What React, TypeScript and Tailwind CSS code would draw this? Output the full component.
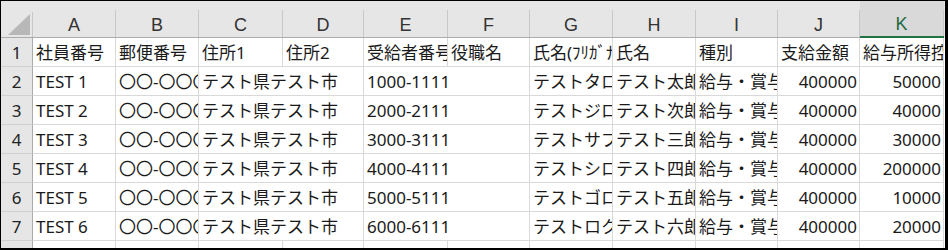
import React from 'react';

const cols = ['A', 'B', 'C', 'D', 'E', 'F', 'G', 'H', 'I', 'J', 'K'];

const headings = [
  '社員番号',
  '郵便番号',
  '住所1',
  '住所2',
  '受給者番号',
  '役職名',
  '氏名(ﾌﾘｶﾞﾅ)',
  '氏名',
  '種別',
  '支給金額',
  '給与所得控除後の金額',
];

type Row = {
  id: string;
  zip: string;
  addr: string;
  num: string;
  kana: string;
  name: string;
  kind: string;
  pay: number;
  net: number;
};

const rows: Row[] = [
  { id: 'TEST 1', zip: '〇〇-〇〇〇〇', addr: 'テスト県テスト市', num: '1000-1111', kana: 'テストタロウ', name: 'テスト太郎', kind: '給与・賞与', pay: 400000, net: 50000 },
  { id: 'TEST 2', zip: '〇〇-〇〇〇〇', addr: 'テスト県テスト市', num: '2000-2111', kana: 'テストジロウ', name: 'テスト次郎', kind: '給与・賞与', pay: 400000, net: 40000 },
  { id: 'TEST 3', zip: '〇〇-〇〇〇〇', addr: 'テスト県テスト市', num: '3000-3111', kana: 'テストサブロウ', name: 'テスト三郎', kind: '給与・賞与', pay: 400000, net: 30000 },
  { id: 'TEST 4', zip: '〇〇-〇〇〇〇', addr: 'テスト県テスト市', num: '4000-4111', kana: 'テストシロウ', name: 'テスト四郎', kind: '給与・賞与', pay: 400000, net: 200000 },
  { id: 'TEST 5', zip: '〇〇-〇〇〇〇', addr: 'テスト県テスト市', num: '5000-5111', kana: 'テストゴロウ', name: 'テスト五郎', kind: '給与・賞与', pay: 400000, net: 10000 },
  { id: 'TEST 6', zip: '〇〇-〇〇〇〇', addr: 'テスト県テスト市', num: '6000-6111', kana: 'テストロクロウ', name: 'テスト六郎', kind: '給与・賞与', pay: 400000, net: 20000 },
];

const gridCols =
  'grid grid-cols-[32px_83px_83px_84px_81px_84px_82px_83px_83px_82px_82px_84px]';

const cellBase =
  'flex items-center overflow-hidden whitespace-nowrap border-r border-b border-[#d9d9d9] bg-white';

const Cell = ({
  children,
  right,
  span,
}: {
  children?: React.ReactNode;
  right?: boolean;
  span?: boolean;
}) => (
  <div
    className={`${cellBase} ${right ? 'justify-end pr-[2px]' : 'pl-[3px]'} ${span ? 'col-span-2' : ''}`}
  >
    <span className="shrink-0">{children}</span>
  </div>
);

const RowHead = ({ n }: { n: number }) => (
  <div className="flex items-center justify-center border-r border-b border-r-[#ababab] border-b-[#d0d0d0] bg-[#e6e6e6] text-[#222]">
    {n}
  </div>
);

export default function App() {
  return (
    <div className="h-[250px] w-[948px] overflow-hidden border-t border-l border-r-[3px] border-b-2 border-black bg-white font-['Noto_Sans','Noto_Sans_CJK_JP',sans-serif] text-[17px] leading-none text-[#1a1a1a]">
      {/* column letters */}
      <div className={`${gridCols} h-[37px] bg-[#e6e6e6]`}>
        <div className="flex flex-col border-b border-[#ababab]">
          <div className="h-[11px]" />
          <div className="flex flex-1 items-end justify-end border-r border-[#c8c8c8] pb-[2px] pr-[2px]">
            <svg width="22" height="21" viewBox="0 0 22 21">
              <polygon points="22,0 22,21 0,21" fill="#b8b8b8" />
            </svg>
          </div>
        </div>
        {cols.map((c) => (
          <div
            key={c}
            className={`flex flex-col ${c === 'K' ? 'border-b-2 border-[#217346] bg-[#d9d9d9] text-[#1e6b41]' : 'border-b border-[#ababab] text-[#333]'}`}
          >
            <div className="h-[9px]" />
            <div className="flex flex-1 items-center justify-center border-r border-[#c8c8c8] pt-[2px] font-['Liberation_Sans',sans-serif] text-[18px]">
              {c}
            </div>
          </div>
        ))}
      </div>

      {/* rows */}
      <div className={`${gridCols} auto-rows-[29px]`}>
        <RowHead n={1} />
        {headings.map((h) => (
          <Cell key={h}>{h}</Cell>
        ))}

        {rows.map((r, i) => (
          <React.Fragment key={r.id}>
            <RowHead n={i + 2} />
            <Cell>{r.id}</Cell>
            <Cell>{r.zip}</Cell>
            <Cell span>{r.addr}</Cell>
            <Cell span>{r.num}</Cell>
            <Cell>{r.kana}</Cell>
            <Cell>{r.name}</Cell>
            <Cell>{r.kind}</Cell>
            <Cell right>{r.pay}</Cell>
            <Cell right>{r.net}</Cell>
          </React.Fragment>
        ))}

        <RowHead n={8} />
        {cols.map((c) => (
          <Cell key={`r8-${c}`} />
        ))}
      </div>
    </div>
  );
}
